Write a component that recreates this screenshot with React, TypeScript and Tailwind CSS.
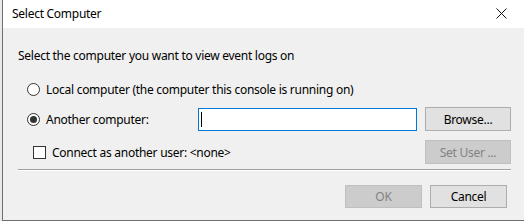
const FONT = { fontFamily: '"Noto Sans", "Liberation Sans", sans-serif', letterSpacing: "-0.27px" };

function Radio({ checked }: { checked?: boolean }) {
  return (
    <span className="grid h-[13px] w-[13px] shrink-0 place-items-center rounded-full border border-[#333333] bg-white">
      {checked && <span className="h-[7px] w-[7px] rounded-full bg-[#333333]" />}
    </span>
  );
}

function Button({ label, disabled, className }: { label: string; disabled?: boolean; className: string }) {
  return (
    <div
      className={
        "flex items-center justify-center border pt-px text-[12px] " +
        (disabled
          ? "border-[#bfbfbf] bg-[#cccccc] text-[#838383] "
          : "border-[#adadad] bg-[#e1e1e1] text-black ") +
        className
      }
    >
      {label}
    </div>
  );
}

export default function App() {
  return (
    <div className="flex h-[224px] w-[524px] flex-col overflow-hidden bg-white text-black" style={FONT}>
      <div className="flex h-[221px]">
        <div className="w-[2px] shrink-0 bg-[#e9e9e9]" />
        <div className="flex flex-1 flex-col border-b border-l border-[#6f6f6f] bg-[#f0f0f0]">
          {/* title bar */}
          <div className="flex h-[28px] items-center bg-white pl-[9px] pr-[18px] text-[12px]">
            <span className="flex-1">Select Computer</span>
            <svg width="11" height="11" viewBox="0 0 11 11" className="mt-[-2px]">
              <path d="M0.5 0.5 L10.5 10.5 M10.5 0.5 L0.5 10.5" stroke="#111" strokeWidth="1" fill="none" />
            </svg>
          </div>

          {/* body */}
          <div className="flex flex-col pl-[15px] pr-[14px] text-[12px]">
            <div className="mt-[16px] flex h-[20px] items-center pt-[4px]">
              Select the computer you want to view event logs on
            </div>

            <div className="mt-[15px] flex h-[19px] items-center gap-[6px] pl-[9px]">
              <span className="pt-[2px]">
                <Radio />
              </span>
              <span className="pt-[2px]">Local computer (the computer this console is running on)</span>
            </div>

            <div className="mt-[9px] flex h-[24px] items-center">
              <div className="flex w-[180px] items-center gap-[6px] pl-[9px]">
                <Radio checked />
                <span className="pt-[2px]">Another computer:</span>
              </div>
              <div className="flex h-[23px] w-[219px] items-center border border-[#0078d7] bg-white pl-[2px]">
                <span className="h-[15px] w-px bg-black" />
              </div>
              <Button label="Browse..." className="ml-[8px] h-[24px] w-[86px]" />
            </div>

            <div className="mt-[9px] flex h-[24px] items-center">
              <div className="flex flex-1 items-center gap-[6px] pl-[15px]">
                <span className="h-[13px] w-[13px] shrink-0 border border-[#333333] bg-white" />
                <span className="pt-[1px]">Connect as another user: &lt;none&gt;</span>
              </div>
              <Button label="Set User ..." disabled className="h-[24px] w-[86px]" />
            </div>

            <div className="mt-[5px] h-[2px] border-b border-t border-b-white border-t-[#a0a0a0]" />

            <div className="mt-[14px] flex justify-end gap-[8px] pr-[4px]">
              <Button label="OK" disabled className="h-[23px] w-[77px]" />
              <Button label="Cancel" className="h-[23px] w-[77px]" />
            </div>
          </div>
        </div>
      </div>

      {/* app behind the dialog, only its top edge shows */}
      <div className="relative h-[3px] overflow-hidden">
        <div className="absolute left-[13px] top-[0px] flex items-center gap-[6px] text-[12px]">
          <span className="h-[8px] w-[14px] bg-[linear-gradient(90deg,#5b7fb8_0_30%,#c0392b_30%_60%,#9fb3d1_60%)]" />
          <span className="mt-[8px] leading-[16px]">System</span>
        </div>
      </div>
    </div>
  );
}
